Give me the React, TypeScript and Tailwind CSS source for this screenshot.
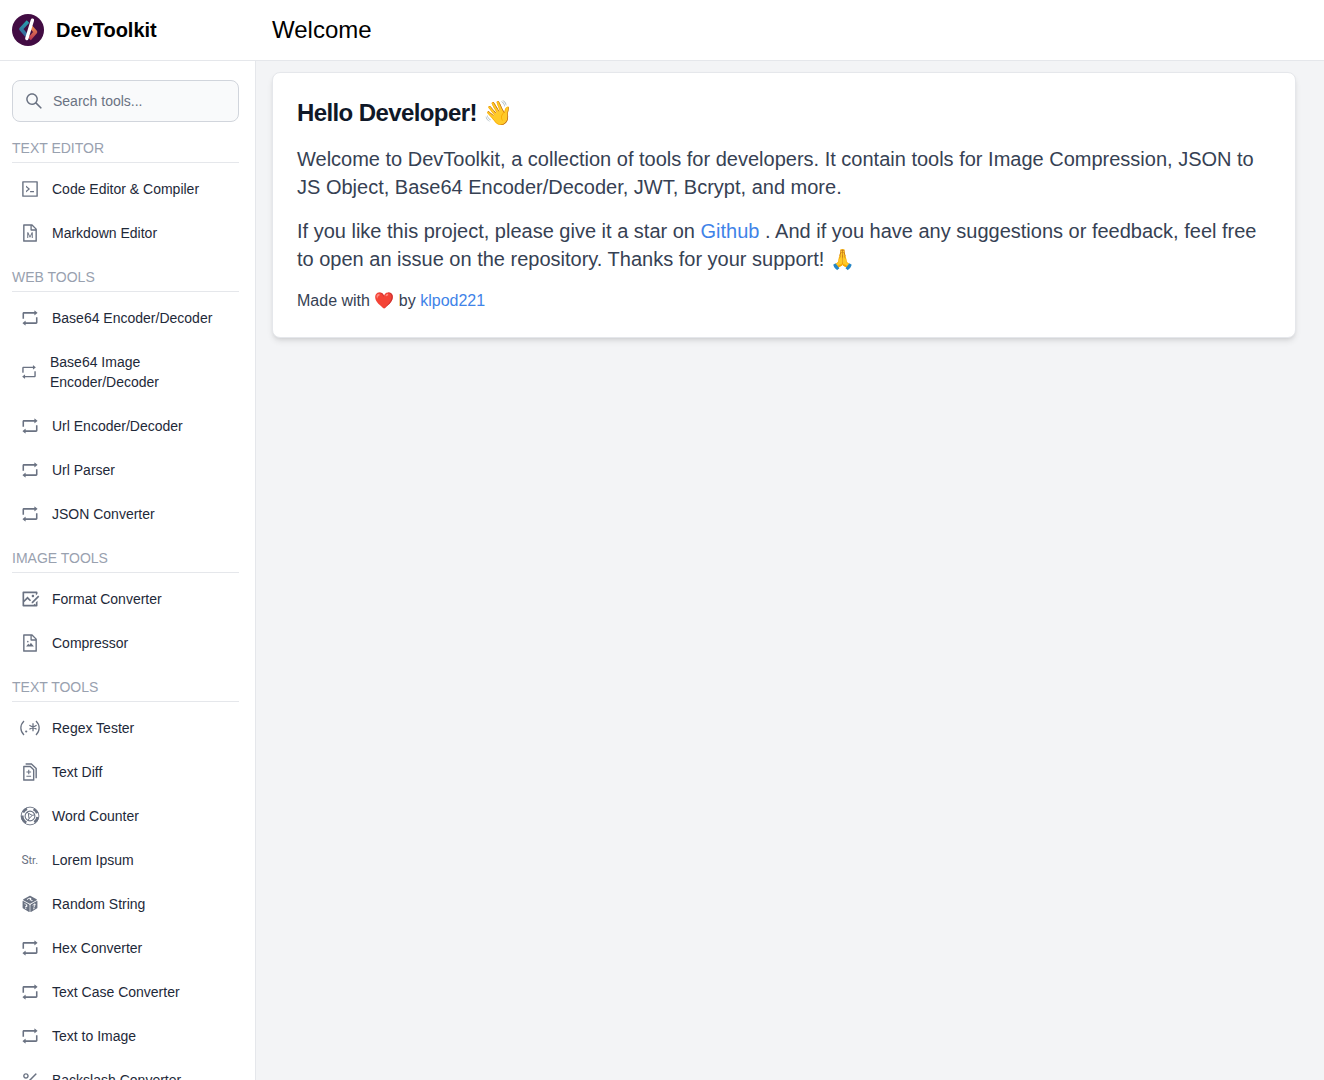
import type { ReactNode } from "react";
import {
  AiOutlineCode,
  AiOutlineDiff,
  AiOutlineFileImage,
  AiOutlineFileMarkdown,
  AiOutlinePercentage,
  AiOutlineRetweet,
  AiOutlineSearch,
} from "react-icons/ai";
import { GiPerspectiveDiceSixFacesRandom } from "react-icons/gi";
import { RiImageEditLine } from "react-icons/ri";

function Logo() {
  return (
    <svg viewBox="0 0 32 32" className="size-8" aria-hidden="true">
      <defs>
        <linearGradient id="teal" x1="0" y1="0" x2="0" y2="1">
          <stop offset="0" stopColor="#279dab" />
          <stop offset="1" stopColor="#39669b" />
        </linearGradient>
        <linearGradient id="coral" x1="0" y1="0" x2="0" y2="1">
          <stop offset="0" stopColor="#e7884f" />
          <stop offset="1" stopColor="#bd3952" />
        </linearGradient>
      </defs>
      <circle cx="16" cy="16" r="16" fill="#420c43" />
      <g fill="none" strokeWidth="3.6" strokeLinejoin="round">
        <path d="M16 7.5 9 15l5.500 6.500" stroke="url(#teal)" />
        <path d="m19 13 4.500 5-6 7" stroke="url(#coral)" />
      </g>
      <path d="M20.400 6.200 14.800 24.500" stroke="#fff" strokeWidth="3.400" strokeLinecap="round" />
    </svg>
  );
}

function RegexIcon() {
  return (
    <svg viewBox="0 0 20 20" fill="none" stroke="currentColor" strokeWidth="1.300" className="size-5">
      <path d="M4 3C-.2 7 -.2 13 4 17M16 3c4.200 4 4.200 10 0 14M13 5.200v8M9.400 7.200l7.200 4M16.600 7.200l-7.200 4" />
      <circle cx="6.200" cy="13.500" r="1.100" fill="currentColor" stroke="none" />
    </svg>
  );
}

function CounterIcon() {
  return (
    <svg viewBox="0 0 20 20" fill="none" stroke="currentColor" className="size-5">
      <circle cx="10" cy="10" r="8.900" strokeWidth=".9" />
      <path d="M7 2.800A7.700 7.700 0 0 0 3 6.500M2.300 9.500a7.700 7.700 0 0 0 4 7.200M13.500 3.200a7.700 7.700 0 0 1 3.700 4M17.600 11a7.700 7.700 0 0 1-3.200 5.400" strokeWidth="2.600" />
      <circle cx="10" cy="10" r="4.900" strokeWidth="1.100" />
      <path d="m8.300 7.200 4 2.200-3.300 3.200zM12.300 9.400l2.500-.6M9 12.600l-1 2.200M8.300 7.200 7 6" strokeWidth="1" />
    </svg>
  );
}

function StringIcon() {
  return (
    <svg viewBox="0 0 20 20" fill="currentColor" className="size-5">
      <text x="1.500" y="14.300" fontSize="12" fontFamily="Roboto, sans-serif">
        S
        <tspan x="8.500" fontSize="11">
          tr.
        </tspan>
      </text>
    </svg>
  );
}

type Tool = { name: string; icon: ReactNode };

const repeat = <AiOutlineRetweet className="size-5" />;

const groups: { title: string; tools: Tool[] }[] = [
  {
    title: "TEXT EDITOR",
    tools: [
      { name: "Code Editor & Compiler", icon: <AiOutlineCode className="size-5" /> },
      { name: "Markdown Editor", icon: <AiOutlineFileMarkdown className="size-5" /> },
    ],
  },
  {
    title: "WEB TOOLS",
    tools: [
      { name: "Base64 Encoder/Decoder", icon: repeat },
      { name: "Base64 Image Encoder/Decoder", icon: <AiOutlineRetweet className="h-5 w-[18px]" /> },
      { name: "Url Encoder/Decoder", icon: repeat },
      { name: "Url Parser", icon: repeat },
      { name: "JSON Converter", icon: repeat },
    ],
  },
  {
    title: "IMAGE TOOLS",
    tools: [
      { name: "Format Converter", icon: <RiImageEditLine className="size-5" /> },
      { name: "Compressor", icon: <AiOutlineFileImage className="size-5" /> },
    ],
  },
  {
    title: "TEXT TOOLS",
    tools: [
      { name: "Regex Tester", icon: <RegexIcon /> },
      { name: "Text Diff", icon: <AiOutlineDiff className="size-5" /> },
      { name: "Word Counter", icon: <CounterIcon /> },
      { name: "Lorem Ipsum", icon: <StringIcon /> },
      { name: "Random String", icon: <GiPerspectiveDiceSixFacesRandom className="size-5" /> },
      { name: "Hex Converter", icon: repeat },
      { name: "Text Case Converter", icon: repeat },
      { name: "Text to Image", icon: repeat },
      { name: "Backslash Converter", icon: <AiOutlinePercentage className="size-5" /> },
    ],
  },
];

function Sidebar() {
  return (
    <aside className="w-64 shrink-0 overflow-hidden border-r border-gray-200 bg-white pt-[19px] pr-4 pl-3">
      <label className="flex h-[42px] items-center gap-2 rounded-lg border border-gray-300 bg-gray-50 pr-3 pl-[11px]">
        <AiOutlineSearch className="mr-px size-5 shrink-0 text-gray-500" />
        <input
          type="search"
          aria-label="Search tools"
          placeholder="Search tools..."
          className="w-full min-w-0 bg-transparent text-sm text-gray-900 outline-none placeholder:text-gray-500"
        />
      </label>
      <nav className="pt-4">
        {groups.map((group) => (
          <section key={group.title} className="pb-3">
            <h2 className="border-b border-gray-200 pb-1 text-sm text-gray-400">{group.title}</h2>
            <ul className="pt-1">
              {group.tools.map((tool) => (
                <li key={tool.name}>
                  <a href="#" className="flex items-center gap-3 px-2 py-3 text-sm text-gray-800">
                    <span className="shrink-0 text-gray-500">{tool.icon}</span>
                    <span>{tool.name}</span>
                  </a>
                </li>
              ))}
            </ul>
          </section>
        ))}
      </nav>
    </aside>
  );
}

export default function App() {
  return (
    <div className="flex h-screen flex-col overflow-hidden bg-gray-100 font-['Liberation_Sans',Arial,sans-serif]">
      <header className="flex shrink-0 items-center border-b border-gray-200 bg-white py-3">
        <a href="#" className="flex h-9 w-[272px] shrink-0 items-center gap-3 pl-3 text-xl font-bold text-black">
          <Logo />
          DevToolkit
        </a>
        <h1 className="text-2xl text-black">Welcome</h1>
      </header>
      <div className="flex min-h-0 flex-1">
        <Sidebar />
        <main className="min-w-0 flex-1 pt-[11px] pr-7 pl-4">
          <article className="rounded-lg border border-gray-200 bg-white p-6 shadow-md">
            <h2 className="pb-4 text-2xl font-bold tracking-tight text-gray-900">Hello Developer! 👋</h2>
            <p className="pb-4 text-xl text-gray-700">
              Welcome to DevToolkit, a collection of tools for developers. It contain tools for Image Compression, JSON
              to JS Object, Base64 Encoder/Decoder, JWT, Bcrypt, and more.
            </p>
            <p className="pb-4 text-xl text-gray-700">
              If you like this project, please give it a star on{" "}
              <a href="#" className="text-[#3f83e8]">
                Github
              </a>{" "}
              . And if you have any suggestions or feedback, feel free to open an issue on the repository. Thanks for
              your support! 🙏
            </p>
            <p className="text-gray-700">
              Made with ❤️ by{" "}
              <a href="#" className="text-[#3f83e8]">
                klpod221
              </a>
            </p>
          </article>
        </main>
      </div>
    </div>
  );
}
